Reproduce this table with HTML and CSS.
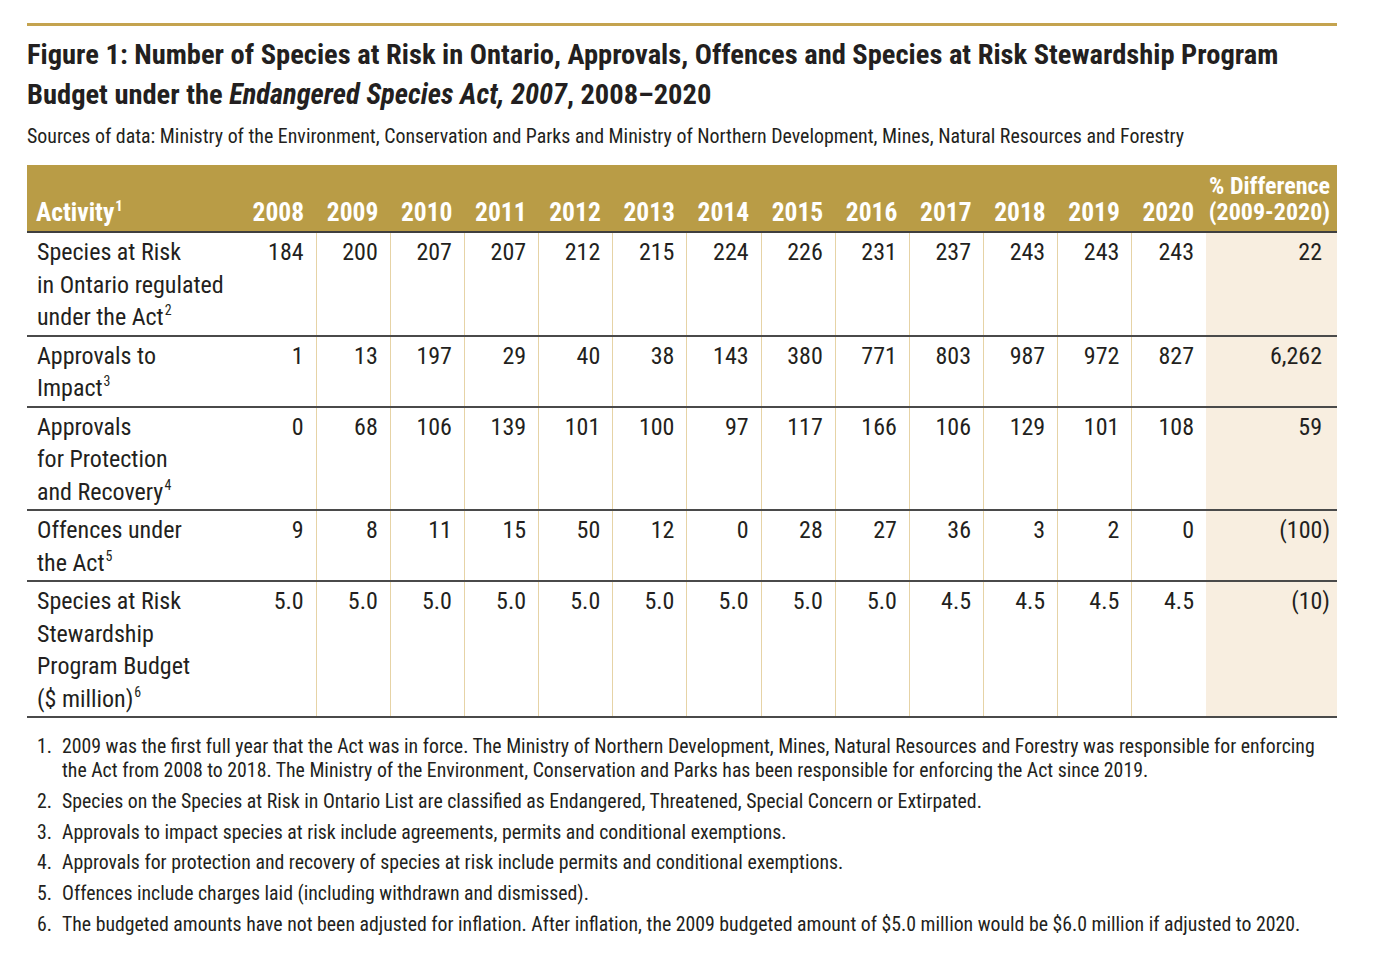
FILE: index.html
```html
<!DOCTYPE html>
<html lang="en">
<head>
<meta charset="utf-8">
<title>Figure 1: Species at Risk in Ontario</title>
<link rel="stylesheet" href="styles.css">
</head>
<body>
<main class="figure">
  <div class="rule"></div>
  <h1 class="title">Figure 1: Number of Species at Risk in Ontario, Approvals, Offences and Species at Risk Stewardship Program<br>Budget under the <em>Endangered Species Act, 2007</em>, 2008–2020</h1>
  <p class="sources">Sources of data: Ministry of the Environment, Conservation and Parks and Ministry of Northern Development, Mines, Natural Resources and Forestry</p>

  <table class="data">
    <colgroup>
      <col class="c-act"><col class="c-yr"><col class="c-yr"><col class="c-yr"><col class="c-yr"><col class="c-yr"><col class="c-yr"><col class="c-yr"><col class="c-yr"><col class="c-yr"><col class="c-yr"><col class="c-yr"><col class="c-yr"><col class="c-yr"><col class="c-diff">
    </colgroup>
    <thead>
      <tr>
        <th class="act">Activity<sup>1</sup></th>
        <th>2008</th><th>2009</th><th>2010</th><th>2011</th><th>2012</th><th>2013</th><th>2014</th><th>2015</th><th>2016</th><th>2017</th><th>2018</th><th>2019</th><th>2020</th>
        <th class="diff">% Difference<br>(2009-2020)</th>
      </tr>
    </thead>
    <tbody>
      <tr>
        <td class="act">Species at Risk<br>in Ontario regulated<br>under the Act<sup>2</sup></td>
        <td class="first">184</td><td>200</td><td>207</td><td>207</td><td>212</td><td>215</td><td>224</td><td>226</td><td>231</td><td>237</td><td>243</td><td>243</td><td>243</td>
        <td class="diff pos">22</td>
      </tr>
      <tr>
        <td class="act">Approvals to<br>Impact<sup>3</sup></td>
        <td class="first">1</td><td>13</td><td>197</td><td>29</td><td>40</td><td>38</td><td>143</td><td>380</td><td>771</td><td>803</td><td>987</td><td>972</td><td>827</td>
        <td class="diff pos">6,262</td>
      </tr>
      <tr>
        <td class="act">Approvals<br>for Protection<br>and Recovery<sup>4</sup></td>
        <td class="first">0</td><td>68</td><td>106</td><td>139</td><td>101</td><td>100</td><td>97</td><td>117</td><td>166</td><td>106</td><td>129</td><td>101</td><td>108</td>
        <td class="diff pos">59</td>
      </tr>
      <tr>
        <td class="act">Offences under<br>the Act<sup>5</sup></td>
        <td class="first">9</td><td>8</td><td>11</td><td>15</td><td>50</td><td>12</td><td>0</td><td>28</td><td>27</td><td>36</td><td>3</td><td>2</td><td>0</td>
        <td class="diff">(100)</td>
      </tr>
      <tr>
        <td class="act">Species at Risk<br>Stewardship<br>Program Budget<br>($ million)<sup>6</sup></td>
        <td class="first">5.0</td><td>5.0</td><td>5.0</td><td>5.0</td><td>5.0</td><td>5.0</td><td>5.0</td><td>5.0</td><td>5.0</td><td>4.5</td><td>4.5</td><td>4.5</td><td>4.5</td>
        <td class="diff">(10)</td>
      </tr>
    </tbody>
  </table>

  <ol class="notes">
    <li>2009 was the first full year that the Act was in force. The Ministry of Northern Development, Mines, Natural Resources and Forestry was responsible for enforcing<br>the Act from 2008 to 2018. The Ministry of the Environment, Conservation and Parks has been responsible for enforcing the Act since 2019.</li>
    <li>Species on the Species at Risk in Ontario List are classified as Endangered, Threatened, Special Concern or Extirpated.</li>
    <li>Approvals to impact species at risk include agreements, permits and conditional exemptions.</li>
    <li>Approvals for protection and recovery of species at risk include permits and conditional exemptions.</li>
    <li>Offences include charges laid (including withdrawn and dismissed).</li>
    <li>The budgeted amounts have not been adjusted for inflation. After inflation, the 2009 budgeted amount of $5.0 million would be $6.0 million if adjusted to 2020.</li>
  </ol>
</main>
</body>
</html>
```
FILE: styles.css
```css
html, body {
  margin: 0;
  padding: 0;
  background: #ffffff;
}

body {
  font-family: "Roboto Condensed", "Roboto", "Liberation Sans", sans-serif;
  color: #231f20;
}

.figure {
  width: 1310px;
  padding: 23px 0 0 27px;
}

.rule {
  height: 3px;
  background: #c4a34f;
}

.title {
  margin: 9px 0 0;
  font-size: 28.5px;
  line-height: 39.5px;
  font-weight: 700;
  letter-spacing: 0;
}

.title em {
  font-style: italic;
}

.sources {
  margin: 11px 0 0;
  font-size: 19.9px;
  line-height: 24px;
  white-space: nowrap;
}

/* ---------- table ---------- */
.data {
  margin-top: 16px;
  width: 1310px;
  border-collapse: collapse;
  table-layout: fixed;
}

.c-act { width: 215px; }
.c-yr { width: 74.17px; }
.c-diff { width: 131px; }

.data th {
  background: #b99c46;
  color: #ffffff;
  font-weight: 700;
  font-size: 25.5px;
  line-height: 26px;
  height: 60px;
  padding: 0 12px 6px 0;
  text-align: right;
  vertical-align: bottom;
  border-bottom: 2px solid #3f3f3f;
  white-space: nowrap;
}

.data th.act {
  text-align: left;
  padding-left: 9px;
}

.data th.diff {
  padding-right: 7px;
  font-size: 24px;
}

.data sup {
  font-size: 0.58em;
  line-height: 0;
  vertical-align: 0.7em;
  margin-left: 1px;
}

.data td {
  font-size: 24px;
  line-height: 32.5px;
  padding: 3px 12px 1px 0;
  text-align: right;
  vertical-align: top;
  border-bottom: 2px solid #4a4a4a;
  border-left: 1px solid #e6d3a6;
  white-space: nowrap;
}

.data td.act {
  text-align: left;
  padding-left: 10px;
  border-left: none;
}

.data td.first {
  border-left: none;
}

.data td.diff {
  background: #f8eee0;
  border-left: none;
  padding-right: 7px;
}

.data td.diff.pos {
  padding-right: 15px;
}

/* ---------- notes ---------- */
.notes {
  margin: 17px 0 0;
  padding: 0;
  list-style: none;
  counter-reset: fn;
  font-size: 19.8px;
  line-height: 24px;
}

.notes li {
  counter-increment: fn;
  display: grid;
  grid-template-columns: 25px 1fr;
  padding-left: 10px;
  margin-bottom: 6.8px;
}

.notes li::before {
  content: counter(fn) ".";
}
```
